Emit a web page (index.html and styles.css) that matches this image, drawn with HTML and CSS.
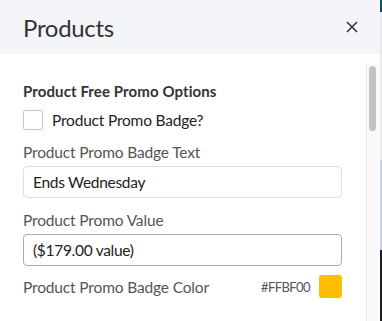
FILE: index.html
```html
<!DOCTYPE html>
<html>
<head>
<meta charset="utf-8">
<link rel="stylesheet" href="styles.css">
</head>
<body>
<div class="panel">
  <header class="head">
    <h1 class="title">Products</h1>
    <button class="close" aria-label="Close">
      <svg width="12" height="12" viewBox="0 0 12 12"><path d="M1 1L11 11M11 1L1 11" stroke="#333" stroke-width="1.5" fill="none"/></svg>
    </button>
  </header>
  <div class="body">
    <div class="content">
      <h2 class="section">Product Free Promo Options</h2>
      <label class="check">
        <span class="box"></span>
        <span>Product Promo Badge?</span>
      </label>
      <div class="field">
        <div class="label">Product Promo Badge Text</div>
        <div class="input">Ends Wednesday</div>
      </div>
      <div class="field">
        <div class="label">Product Promo Value</div>
        <div class="input focus">($179.00 value)</div>
      </div>
      <div class="color-row">
        <div class="label">Product Promo Badge Color</div>
        <div class="color-val">
          <span class="hex">#FFBF00</span>
          <span class="swatch"></span>
        </div>
      </div>
    </div>
    <div class="scrolltrack"><div class="thumb"></div></div>
  </div>
</div>
</body>
</html>
```
FILE: styles.css
```css
* { box-sizing: border-box; }
html, body { margin: 0; height: 100%; }
body {
  width: 382px;
  height: 321px;
  overflow: hidden;
  background: linear-gradient(to bottom, #0d4f5c 0, #0d4f5c 12px, #e9ebf0 12px, #e9ebf0 160px, #c9cfe6 160px, #c9cfe6 250px, #1d1d1d 250px);
  font-family: "Source Sans Pro", "Lato", "Open Sans", sans-serif;
  color: #333;
}
.panel {
  width: 380px;
  height: 321px;
  background: #fff;
  display: flex;
  flex-direction: column;
}
.head {
  height: 54px;
  flex: none;
  background: #f4f5f9;
  display: flex;
  align-items: center;
  justify-content: space-between;
  padding: 0 22px 0 23px;
}
.title {
  margin: 0;
  font-size: 24px;
  font-weight: 400;
  color: #333;
  letter-spacing: -0.3px;
}
.close {
  border: 0;
  background: none;
  padding: 0;
  width: 12px;
  height: 12px;
  display: flex;
}
.body {
  flex: 1;
  display: flex;
  position: relative;
}
.content {
  flex: 1;
  padding: 28px 38px 0 23px;
  display: flex;
  flex-direction: column;
}
.section {
  margin: 0;
  font-size: 15px;
  font-weight: 700;
  color: #333;
  line-height: 18px;
  letter-spacing: 0.1px;
}
.check {
  display: flex;
  align-items: center;
  gap: 9px;
  margin-top: 10px;
  font-size: 15.5px;
  letter-spacing: -0.2px;
  color: #222;
}
.box {
  width: 20px;
  height: 20px;
  border: 1px solid #c4c6d4;
  border-radius: 2px;
  background: #fff;
}
.field { margin-top: 12px; }
.label {
  font-size: 15.5px;
  letter-spacing: -0.15px;
  color: #555;
  line-height: 20px;
}
.input {
  margin-top: 4px;
  height: 32px;
  border: 1px solid #dcdde3;
  border-radius: 4px;
  padding: 0 9px;
  display: flex;
  align-items: center;
  font-size: 15.5px;
  letter-spacing: -0.3px;
  color: #222;
}
.input.focus { border-color: #a9abc6; }
.color-row {
  margin-top: 9px;
  display: flex;
  align-items: center;
  justify-content: space-between;
}
.color-val {
  display: flex;
  align-items: center;
  gap: 9px;
}
.hex {
  font-size: 13px;
  letter-spacing: -0.6px;
  color: #555;
}
.swatch {
  width: 23px;
  height: 23px;
  border-radius: 3px;
  background: #ffbf00;
}
.scrolltrack {
  position: absolute;
  right: 2px;
  top: 9px;
  bottom: 0;
  width: 12px;
  border-left: 1px solid #e6e6e6;
  background: #fafafa;
}
.thumb {
  position: absolute;
  left: 2px;
  top: 3px;
  width: 7px;
  height: 65px;
  border-radius: 4px;
  background: #c4c4c4;
}
```
